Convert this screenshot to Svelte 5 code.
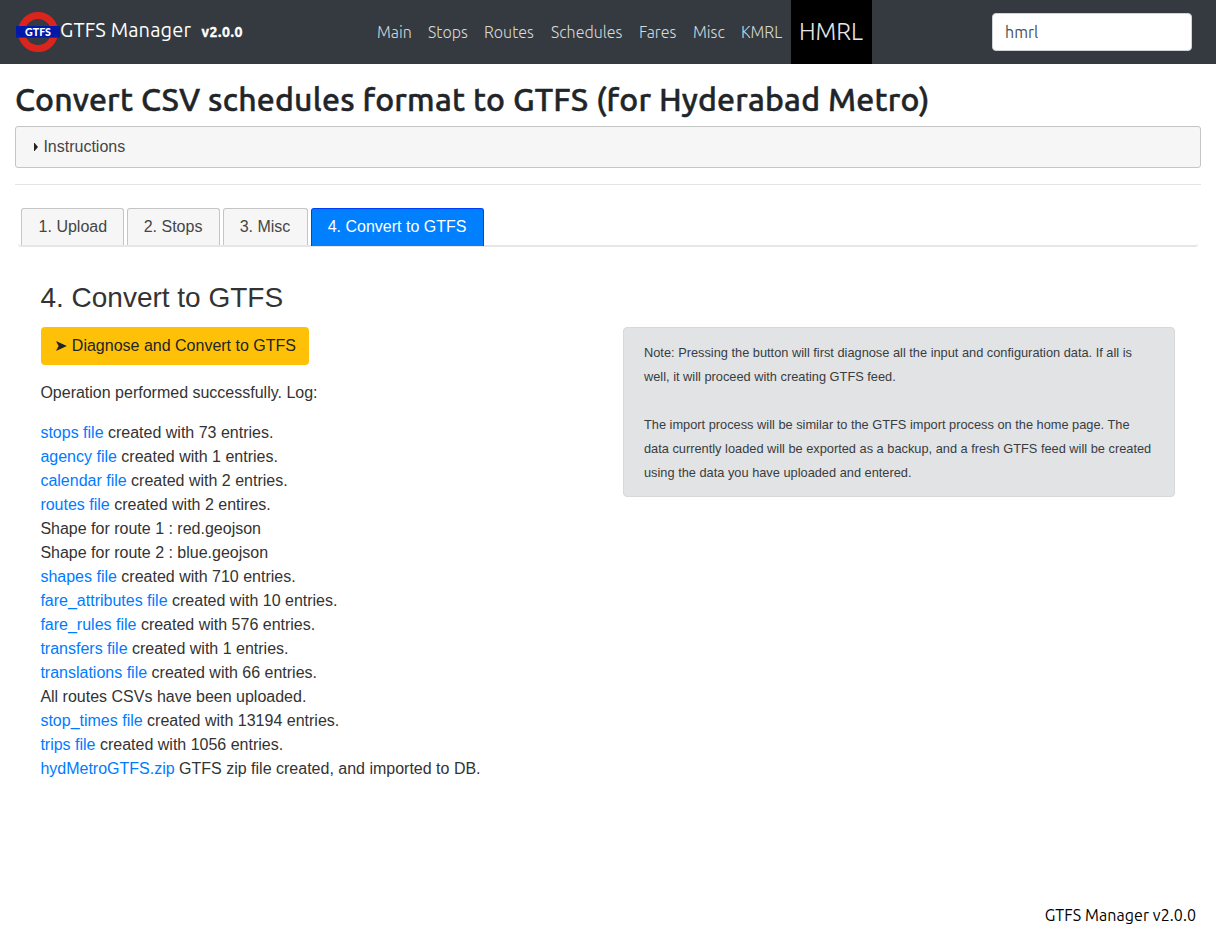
<script>
  const nav = [
    { label: 'Main', width: 51 },
    { label: 'Stops', width: 56 },
    { label: 'Routes', width: 67 },
    { label: 'Schedules', width: 88 },
    { label: 'Fares', width: 54 },
    { label: 'Misc', width: 48 },
    { label: 'KMRL', width: 58 },
    { label: 'HMRL', width: 81, active: true }
  ];
  const tabs = [
    { label: '1. Upload', width: 103 },
    { label: '2. Stops', width: 93 },
    { label: '3. Misc', width: 85 },
    { label: '4. Convert to GTFS', width: 173, active: true }
  ];
  const log = [
    ['stops file', ' created with 73 entries.'],
    ['agency file', ' created with 1 entries.'],
    ['calendar file', ' created with 2 entries.'],
    ['routes file', ' created with 2 entires.'],
    ['', 'Shape for route 1 : red.geojson'],
    ['', 'Shape for route 2 : blue.geojson'],
    ['shapes file', ' created with 710 entries.'],
    ['fare_attributes file', ' created with 10 entries.'],
    ['fare_rules file', ' created with 576 entries.'],
    ['transfers file', ' created with 1 entries.'],
    ['translations file', ' created with 66 entries.'],
    ['', 'All routes CSVs have been uploaded.'],
    ['stop_times file', ' created with 13194 entries.'],
    ['trips file', ' created with 1056 entries.'],
    ['hydMetroGTFS.zip', ' GTFS zip file created, and imported to DB.']
  ];
  let key = $state('hmrl');
</script>

<div class="page">
  <header>
    <a class="brand" href="#main">
      <svg class="logo" width="44" height="40" viewBox="0 0 44 40">
        <circle cx="22" cy="20" r="16.5" fill="none" stroke="#dc241f" stroke-width="7" />
        <rect y="14" width="44" height="11.6" fill="#0019a8" />
        <text x="22" y="23.9" text-anchor="middle" textLength="26" lengthAdjust="spacingAndGlyphs">GTFS</text>
      </svg>
      <span class="name">GTFS Manager</span>
      <span class="version">v2.0.0</span>
    </a>
    <nav>
      {#each nav as item}
        <a href="#nav" class:active={item.active} style:width="{item.width}px">{item.label}</a>
      {/each}
    </nav>
    <input bind:value={key} aria-label="Key" />
  </header>

  <main>
    <h1>Convert CSV schedules format to GTFS (for Hyderabad Metro)</h1>
    <div class="accordion">
      <svg width="4" height="8" viewBox="0 0 4 8"><path d="M0 0h.6L4 4 .6 8H0z" fill="#222" /></svg>
      <span>Instructions</span>
    </div>
    <hr />
    <div class="tabs">
      {#each tabs as tab}
        <button class:active={tab.active} style:width="{tab.width}px">{tab.label}</button>
      {/each}
    </div>
    <section>
      <h2>4. Convert to GTFS</h2>
      <div class="columns">
        <div class="left">
          <button class="convert"><span class="arrow">➤</span> Diagnose and Convert to GTFS</button>
          <p>Operation performed successfully. Log:</p>
          <div class="log">
            {#each log as [file, text]}
              <div>{#if file}<a href="#file">{file}</a>{/if}{text}</div>
            {/each}
          </div>
        </div>
        <aside>
          Note: Pressing the button will first diagnose all the input and configuration data. If all is well, it will proceed with creating GTFS feed.<br /><br />
          The import process will be similar to the GTFS import process on the home page. The data currently loaded will be exported as a backup, and a fresh GTFS feed will be created using the data you have uploaded and entered.
        </aside>
      </div>
    </section>
  </main>
  <footer><span>GTFS Manager v2.0.0</span></footer>
</div>

<style>
  :global(body) { margin: 0; background: #fff; }
  * { box-sizing: border-box; }
  a { color: #007bff; text-decoration: none; }
  .page {
    height: 937px;
    display: flex;
    flex-direction: column;
    font: 16px/24px "Liberation Sans", Arial, sans-serif;
    color: #333;
    overflow: hidden;
  }
  header, h1, footer, input { font-family: Ubuntu, "Noto Sans", sans-serif; }
  header {
    height: 64px;
    flex: none;
    display: flex;
    align-items: center;
    background: #343a40;
    padding: 0 24px 0 16px;
  }
  .brand { display: flex; width: 353px; color: #fff; white-space: nowrap; }
  .logo { flex: none; display: block; }
  .logo text { font: 900 10.5px Lato, sans-serif; fill: #fff; }
  .name { font-size: 20px; line-height: 36px; width: 141.5px; letter-spacing: 0.14px; }
  .version { font-size: 14px; line-height: 40px; font-weight: 700; letter-spacing: 0.55px; -webkit-text-stroke: 0.4px #fff; }
  nav { display: flex; height: 64px; }
  nav a {
    color: #d6d8d9;
    font-weight: 300;
    line-height: 64px;
    padding-left: 8px;
    white-space: nowrap;
  }
  nav a.active { background: #000; color: #e6e6e6; font-size: 24px; }
  input {
    margin-left: auto;
    width: 200px;
    height: 38px;
    border: 1px solid #ced4da;
    border-radius: 4px;
    padding: 6px 12px;
    font-size: 16px;
    color: #495057;
    background: #fff;
    outline: none;
  }
  main { padding: 16px 15px 0; flex: 1; }
  h1 {
    margin: 0 0 8px;
    font-size: 32px;
    line-height: 38px;
    font-weight: 500;
    letter-spacing: 0.21px;
    -webkit-text-stroke: 0.45px #212529;
    color: #212529;
    white-space: nowrap;
  }
  .accordion {
    height: 42px;
    border: 1px solid #c5c5c5;
    border-radius: 3px;
    background: #f6f6f6;
    color: #454545;
    display: flex;
    align-items: center;
    gap: 5.4px;
    padding: 0 18px;
  }
  .accordion svg { margin-top: -1px; }
  hr { border: 0; border-top: 1px solid #e5e5e5; margin: 16px 0 0; }
  .tabs {
    margin: 23px 3px 0;
    padding-left: 3px;
    display: flex;
    gap: 3px;
    height: 39px;
    border-bottom: 2px solid #e6e6e6;
    border-radius: 3px;
  }
  .tabs button {
    height: 38px;
    border: 1px solid #c5c5c5;
    border-bottom: 0;
    border-radius: 3px 3px 0 0;
    background: #f6f6f6;
    color: #454545;
    font: inherit;
    text-align: left;
    padding: 0 0 1px 15.7px;
  }
  .tabs button:first-child { padding-left: 16.6px; }
  .tabs button:not(.active) { height: 37px; }
  .tabs button.active { background: #007fff; border-color: #003eff; color: #fff; }
  section { padding: 34px 25px 0 25.4px; }
  h2 { margin: 0 0 12px; font-size: 28px; line-height: 34px; font-weight: 400; }
  .columns { display: grid; grid-template-columns: 552px 552px; gap: 30.6px; align-items: start; }
  .left { padding-left: 0.6px; }
  .convert {
    height: 38px;
    width: 268px;
    border: 0;
    border-radius: 4px;
    background: #ffc107;
    color: #212529;
    font: inherit;
    padding: 0;
    display: block;
    white-space: nowrap;
  }
  .arrow { font-family: "DejaVu Sans", sans-serif; font-size: 16px; line-height: 16px; }
  p { margin: 16px 0; }
  p, .log { margin-left: -0.6px; }
  .log div { white-space: pre; }
  aside {
    border: 1px solid #d6d8db;
    border-radius: 4px;
    background: #e2e3e5;
    color: #383d41;
    font-size: 12.8px;
    line-height: 24px;
    height: 170px;
    padding: 13px 20px 0;
  }
  footer {
    height: 34px;
    flex: none;
    text-align: right;
    padding-right: 20px;
    color: #000;
    letter-spacing: 0.07px;
  }
</style>
